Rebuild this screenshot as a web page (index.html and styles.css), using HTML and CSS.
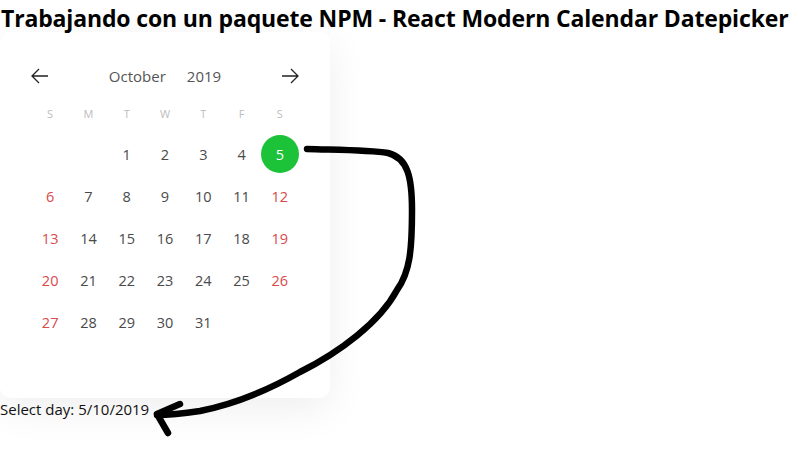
FILE: index.html
```html
<!DOCTYPE html>
<html lang="es">
<head>
<meta charset="utf-8">
<title>React Modern Calendar Datepicker</title>
<link rel="stylesheet" href="styles.css">
</head>
<body>
<div class="page">
  <h1 class="title">Trabajando con un paquete NPM - React Modern Calendar Datepicker</h1>
  <div class="calendar">
    <div class="cal-header">
      <button class="nav-btn" aria-label="Previous month">
        <svg width="20" height="20" viewBox="0 0 20 20"><path d="M18 10H2M9 3L2 10L9 17" fill="none" stroke="#222" stroke-width="1.3"/></svg>
      </button>
      <div class="cal-title"><span>October</span><span>2019</span></div>
      <button class="nav-btn" aria-label="Next month">
        <svg width="20" height="20" viewBox="0 0 20 20"><path d="M2 10H18M11 3L18 10L11 17" fill="none" stroke="#222" stroke-width="1.3"/></svg>
      </button>
    </div>
    <div class="weekdays">
      <span>S</span><span>M</span><span>T</span><span>W</span><span>T</span><span>F</span><span>S</span>
    </div>
    <div class="days">
      <span></span><span></span><span>1</span><span>2</span><span>3</span><span>4</span><span class="selected"><b>5</b></span>
      <span class="weekend">6</span><span>7</span><span>8</span><span>9</span><span>10</span><span>11</span><span class="weekend">12</span>
      <span class="weekend">13</span><span>14</span><span>15</span><span>16</span><span>17</span><span>18</span><span class="weekend">19</span>
      <span class="weekend">20</span><span>21</span><span>22</span><span>23</span><span>24</span><span>25</span><span class="weekend">26</span>
      <span class="weekend">27</span><span>28</span><span>29</span><span>30</span><span>31</span><span></span><span></span>
    </div>
  </div>
  <p class="selected-day">Select day: 5/10/2019</p>
  <svg class="annotation" width="798" height="451" viewBox="0 0 798 451">
    <path d="M307 149 C340 150 370 150 388 153 C408 158 412 178 412 210 C412 250 410 272 397 290 C380 322 340 352 300 372 C265 392 230 405 200 411 C180 414 168 415 157 415" fill="none" stroke="#000" stroke-width="6.5" stroke-linecap="round"/>
    <path d="M180 404 L157 414 L168 433" fill="none" stroke="#000" stroke-width="6.5" stroke-linecap="round" stroke-linejoin="round"/>
  </svg>
</div>
</body>
</html>
```
FILE: styles.css
```css
html, body {
  margin: 0;
  padding: 0;
  background: #fff;
}
body {
  font-family: "Open Sans", "Noto Sans", sans-serif;
  color: #000;
}
.page {
  position: relative;
  width: 798px;
  height: 451px;
  overflow: hidden;
}
.title {
  margin: 0;
  height: 32px;
  line-height: 36px;
  font-size: 23px;
  font-weight: 700;
  letter-spacing: -0.15px;
  white-space: nowrap;
  padding-left: 1px;
}
.calendar {
  width: 330px;
  min-height: 366px;
  box-sizing: border-box;
  padding: 12px 31px 0 31px;
  background: #fff;
  border-radius: 10px;
  box-shadow: 0 10px 40px rgba(0, 0, 0, 0.07);
}
.cal-header {
  margin-top: 20px;
  height: 24px;
  display: flex;
  align-items: center;
  justify-content: space-between;
}
.nav-btn {
  border: 0;
  background: none;
  padding: 0;
  width: 20px;
  height: 20px;
  display: flex;
  margin: 0 -1px;
}
.cal-title {
  display: flex;
  gap: 21px;
  font-size: 15px;
  color: #555;
  margin-left: 0;
}
.weekdays {
  margin-top: 16px;
  display: grid;
  grid-template-columns: repeat(7, 1fr);
  height: 20px;
  line-height: 20px;
  font-size: 11px;
  color: #bdbdbd;
  text-align: center;
}
.days {
  margin-top: 9px;
  display: grid;
  grid-template-columns: repeat(7, 1fr);
  grid-auto-rows: 42px;
  font-size: 14.5px;
  color: #4a4a4a;
  text-align: center;
}
.days span {
  display: flex;
  align-items: center;
  justify-content: center;
}
.days .weekend {
  color: #d94a4a;
}
.days .selected b {
  display: flex;
  align-items: center;
  justify-content: center;
  width: 38px;
  height: 38px;
  border-radius: 50%;
  background: #1cc237;
  color: #fff;
  font-weight: 400;
}
.selected-day {
  margin: 0;
  font-size: 15px;
  line-height: 22px;
  color: #111;
}
.annotation {
  position: absolute;
  left: 0;
  top: 0;
  pointer-events: none;
}
```
